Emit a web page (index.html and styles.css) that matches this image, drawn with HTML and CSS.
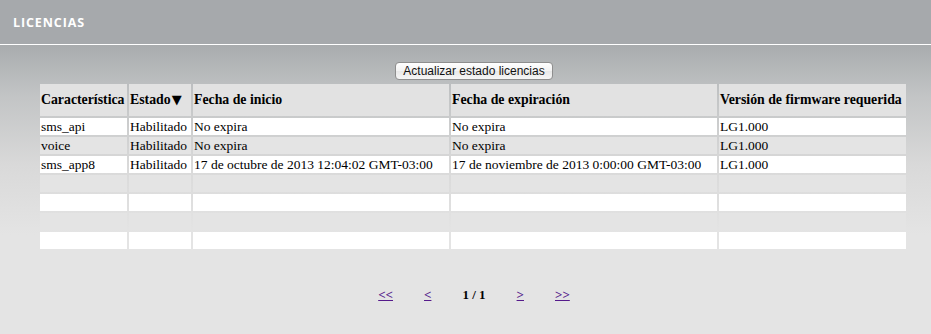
FILE: index.html
```html
<!DOCTYPE html>
<html lang="es">
<head>
<meta charset="utf-8">
<title>Licencias</title>
<link rel="stylesheet" href="styles.css">
</head>
<body>
<div class="page">
  <header class="topbar">
    <h1 class="title">LICENCIAS</h1>
  </header>
  <main class="content">
    <div class="actions">
      <button class="btn" type="button">Actualizar estado licencias</button>
    </div>
    <table class="grid">
      <colgroup>
        <col class="c1"><col class="c2"><col class="c3"><col class="c4"><col class="c5">
      </colgroup>
      <thead>
        <tr>
          <th>Característica</th>
          <th>Estado<span class="sort">▼</span></th>
          <th>Fecha de inicio</th>
          <th>Fecha de expiración</th>
          <th>Versión de firmware requerida</th>
        </tr>
      </thead>
      <tbody>
        <tr class="odd"><td>sms_api</td><td>Habilitado</td><td>No expira</td><td>No expira</td><td>LG1.000</td></tr>
        <tr class="even"><td>voice</td><td>Habilitado</td><td>No expira</td><td>No expira</td><td>LG1.000</td></tr>
        <tr class="odd"><td>sms_app8</td><td>Habilitado</td><td>17 de octubre de 2013 12:04:02 GMT-03:00</td><td>17 de noviembre de 2013 0:00:00 GMT-03:00</td><td>LG1.000</td></tr>
        <tr class="even"><td></td><td></td><td></td><td></td><td></td></tr>
        <tr class="odd"><td></td><td></td><td></td><td></td><td></td></tr>
        <tr class="even"><td></td><td></td><td></td><td></td><td></td></tr>
        <tr class="odd"><td></td><td></td><td></td><td></td><td></td></tr>
        <tr class="even"><td></td><td></td><td></td><td></td><td></td></tr>
      </tbody>
    </table>
    <nav class="pager">
      <a href="#first">&lt;&lt;</a>
      <a href="#prev">&lt;</a>
      <span class="current">1 / 1</span>
      <a href="#next">&gt;</a>
      <a href="#last">&gt;&gt;</a>
    </nav>
  </main>
</div>
</body>
</html>
```

FILE: styles.css
```css
html, body {
  margin: 0;
  padding: 0;
}
body {
  background: #e4e4e4;
  font-family: "Liberation Serif", "Times New Roman", serif;
  font-size: 13px;
  color: #000;
}
.page {
  width: 931px;
  height: 334px;
  overflow: hidden;
}
.topbar {
  height: 44px;
  background: #a6a9ac;
  border-bottom: 1px solid #ffffff;
  display: flex;
  align-items: center;
  padding-left: 13px;
  box-sizing: content-box;
}
.title {
  margin: 0;
  padding-top: 1px;
  font-family: "Open Sans", "DejaVu Sans", sans-serif;
  font-weight: 700;
  font-size: 12.5px;
  letter-spacing: 0.9px;
  color: #ffffff;
}
.content {
  background: linear-gradient(to bottom, #a9acae 0px, #c2c4c5 50px, #d9d9d9 120px, #e4e4e4 190px);
  height: 289px;
  padding: 17px 23px 0 38px;
  box-sizing: border-box;
}
.actions {
  display: flex;
  justify-content: center;
  padding-left: 2px;
  height: 20px;
}
.btn {
  font-family: "Liberation Sans", Arial, sans-serif;
  font-size: 12px;
  height: 18px;
  padding: 0 7px;
  white-space: nowrap;
  color: #111;
  background: linear-gradient(to bottom, #ffffff 0%, #f3f3f3 50%, #e8e8e8 51%, #f6f6f6 100%);
  border: 1px solid #8e8e8e;
  border-radius: 4px;
  line-height: 15px;
}
.grid {
  border-collapse: separate;
  border-spacing: 2px;
  width: 870px;
  table-layout: fixed;
  margin-top: 0;
}
.c1 { width: 87px; }
.c2 { width: 62px; }
.c3 { width: 256px; }
.c4 { width: 266px; }
.c5 { width: 187px; }
.grid th {
  background: #e2e2e2;
  height: 32px;
  padding: 0 1px;
  text-align: left;
  font-weight: 700;
  font-size: 13.8px;
  white-space: nowrap;
  overflow: hidden;
  vertical-align: middle;
}
.sort {
  font-family: "DejaVu Sans", sans-serif;
  font-size: 13px;
  margin-left: 1px;
}
.grid td {
  height: 17px;
  padding: 0 1px;
  line-height: 17px;
  font-size: 13.5px;
  white-space: nowrap;
  overflow: hidden;
  vertical-align: middle;
}
.odd td { background: #ffffff; }
.even td { background: #e4e4e4; }
.pager {
  display: flex;
  justify-content: center;
  gap: 31px;
  padding-left: 2px;
  margin-top: 17px;
  font-weight: 700;
  font-size: 13px;
}
.pager a {
  color: #551a8b;
  text-decoration: underline;
}
.current {
  color: #000;
}
```
